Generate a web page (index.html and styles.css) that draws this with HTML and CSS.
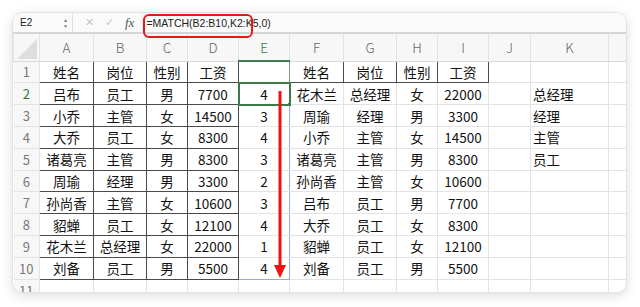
FILE: index.html
```html
<!DOCTYPE html>
<html lang="zh">
  <head>
    <meta charset="UTF-8" />
    <title>MATCH</title>
    <link rel="stylesheet" href="styles.css">
  </head>
  <body>
    <div class="sheet-window">
      <!-- formula bar -->
      <div class="formula-bar">
        <div class="name-box">
          <span>E2</span>
          <span class="spin">&#9650;<br>&#9660;</span>
        </div>
        <div class="fx-tools">
          <span class="tool">&#10005;</span>
          <span class="tool">&#10003;</span>
          <span class="fx">fx</span>
        </div>
        <div class="formula">=MATCH(B2:B10,K2:K5,0)</div>
      </div>

      <table class="grid">
        <colgroup>
          <col style="width:26px"><col style="width:54px"><col style="width:53px"><col style="width:41px"><col style="width:51px"><col style="width:51px"><col style="width:54px"><col style="width:53px"><col style="width:41px"><col style="width:51px"><col style="width:42px"><col style="width:78px"><col style="width:30px">
        </colgroup>
        <thead>
          <tr class="col-head">
            <th class="corner"><span class="tri"></span></th>
            <th>A</th><th>B</th><th>C</th><th>D</th><th class="sel">E</th><th>F</th><th>G</th><th>H</th><th>I</th><th>J</th><th>K</th><th></th>
          </tr>
        </thead>
        <tbody id="rows"></tbody>
      </table>

      <div class="formula-mark"></div>
      <svg class="arrow" width="14" height="190" viewBox="0 0 14 190">
        <rect x="5.5" y="0" width="3" height="178" fill="#f01010" />
        <polygon points="1,174 13,174 7,187" fill="#f01010" />
      </svg>
    </div>

    <script>
      // --- Sheet data ---
      const left = [
        ["姓名", "岗位", "性别", "工资"],
        ["吕布", "员工", "男", "7700"],
        ["小乔", "主管", "女", "14500"],
        ["大乔", "员工", "女", "8300"],
        ["诸葛亮", "主管", "男", "8300"],
        ["周瑜", "经理", "男", "3300"],
        ["孙尚香", "主管", "女", "10600"],
        ["貂蝉", "员工", "女", "12100"],
        ["花木兰", "总经理", "女", "22000"],
        ["刘备", "员工", "男", "5500"]
      ];
      const matchCol = ["", "4", "3", "4", "3", "2", "3", "4", "1", "4"];
      const right = [
        ["姓名", "岗位", "性别", "工资"],
        ["花木兰", "总经理", "女", "22000"],
        ["周瑜", "经理", "男", "3300"],
        ["小乔", "主管", "女", "14500"],
        ["诸葛亮", "主管", "男", "8300"],
        ["孙尚香", "主管", "女", "10600"],
        ["吕布", "员工", "男", "7700"],
        ["大乔", "员工", "女", "8300"],
        ["貂蝉", "员工", "女", "12100"],
        ["刘备", "员工", "男", "5500"]
      ];
      const lookup = ["", "总经理", "经理", "主管", "员工"];

      const rowsEl = document.getElementById("rows");
      let html = "";
      for (let i = 0; i < 11; i++) {
        const n = i + 1;
        html += `<tr><td class="row-num${n === 2 ? ' sel' : ''}">${n}</td>`;
        for (let c = 0; c < 4; c++) {
          html += `<td class="${i < 10 ? 'boxed' : ''}">${i < 10 ? left[i][c] : ""}</td>`;
        }
        let eCls = "e-cell";
        if (i === 0) eCls += " e-top";
        if (i === 1) eCls += " active";
        if (i > 1 && i < 10) eCls += " range";
        if (i === 9) eCls += " range-end";
        html += `<td class="${eCls}">${i < 10 ? matchCol[i] : ""}${i === 1 ? '<span class="handle"></span>' : ''}</td>`;
        for (let c = 0; c < 4; c++) {
          html += `<td class="${i === 0 ? 'boxed' : ''}">${i < 10 ? right[i][c] : ""}</td>`;
        }
        html += `<td></td><td class="left">${lookup[i] || ""}</td><td></td></tr>`;
      }
      rowsEl.innerHTML = html;
    </script>
  </body>
</html>
```

FILE: styles.css
```css
* {
  margin: 0;
  padding: 0;
  box-sizing: border-box;
}

body {
  width: 640px;
  height: 307px;
  background: #fff;
  font-family: "Noto Sans CJK SC", "Noto Sans", sans-serif;
  overflow: hidden;
}

.sheet-window {
  position: relative;
  margin: 12px 0 0 12px;
  width: 615px;
  height: 281px;
  border: 1px solid #e2e2e2;
  border-radius: 10px;
  background: #fff;
  overflow: hidden;
  box-shadow: 0 3px 12px rgba(0,0,0,0.13);
}

/* formula bar */
.formula-bar {
  display: flex;
  align-items: center;
  height: 21px;
  background: #fafafa;
  border-bottom: 2px solid #d6d6d6;
  font-family: "Liberation Sans", Arial, sans-serif;
}
.name-box {
  display: flex;
  align-items: center;
  justify-content: space-between;
  width: 60px;
  height: 100%;
  padding: 0 4px 0 7px;
  font-size: 10px;
  color: #222;
  border-right: 1px solid #e0e0e0;
}
.spin {
  font-size: 5px;
  line-height: 6px;
  color: #777;
  text-align: center;
}
.fx-tools {
  display: flex;
  align-items: center;
  gap: 11px;
  padding: 0 8px 0 12px;
  height: 100%;
  color: #c4c4c4;
  font-size: 11px;
  border-right: 1px solid #e8e8e8;
}
.fx {
  font-family: "Liberation Serif", serif;
  font-style: italic;
  font-size: 13px;
  color: #555;
}
.formula {
  padding-left: 3px;
  font-size: 10.5px;
  color: #222;
}

/* grid */
.grid {
  border-collapse: collapse;
  table-layout: fixed;
  width: 625px;
}
.grid th,
.grid td {
  border: 1px solid #e3e3e3;
  text-align: center;
  white-space: nowrap;
  overflow: hidden;
}
.col-head th {
  height: 27px;
  background: #f7f7f7;
  font-weight: 300;
  font-size: 13.5px;
  color: #666;
  border-top: none;
  border-bottom: 1px solid #d8d8d8;
}
.col-head th.sel {
  color: #2f7a44;
  border-bottom: 2px solid #3f7d52;
}
.corner {
  position: relative;
}
.tri {
  position: absolute;
  right: 2px;
  bottom: 2px;
  width: 0;
  height: 0;
  border-left: 20px solid transparent;
  border-bottom: 20px solid #dedede;
}
.grid td {
  height: 21.8px;
  font-size: 13.5px;
  color: #111;
  padding: 0;
}
.grid td.row-num {
  background: #f7f7f7;
  color: #777;
  font-size: 13px;
  border-left: none;
}
.grid td.row-num.sel {
  color: #2f7a44;
}
.grid td.left {
  text-align: left;
  padding-left: 2px;
}
.grid td.boxed {
  border: 1px solid #4a4a4a;
}
.grid td.e-cell {
  position: relative;
}
.grid td.e-top {
  border: 1px solid #7f9c86;
}
.grid td.active {
  border: 2px solid #3a7a4c;
}
.grid td.range {
  border-left: 1px solid #93abe0;
  border-right: 1px solid #93abe0;
}
.grid td.range-end {
  border-bottom: 1px solid #93abe0;
}
.handle {
  position: absolute;
  right: -4px;
  bottom: -4px;
  width: 6px;
  height: 6px;
  background: #3a7a4c;
  border: 1px solid #fff;
}

/* overlays */
.formula-mark {
  position: absolute;
  left: 130px;
  top: 1px;
  width: 110px;
  height: 24px;
  border: 2px solid #e81818;
  border-radius: 6px;
}
.arrow {
  position: absolute;
  left: 260px;
  top: 78px;
}
```
